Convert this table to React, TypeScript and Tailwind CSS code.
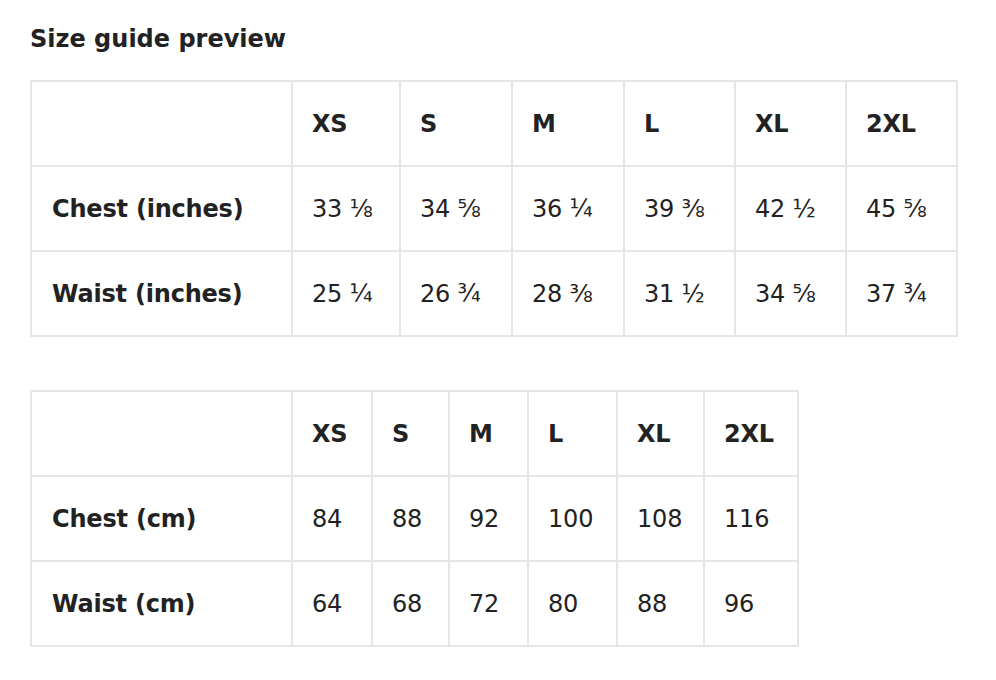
import React from 'react'

const sizes = ['XS', 'S', 'M', 'L', 'XL', '2XL']

const inchRows = [
  { label: 'Chest (inches)', values: ['33 ⅛', '34 ⅝', '36 ¼', '39 ⅜', '42 ½', '45 ⅝'] },
  { label: 'Waist (inches)', values: ['25 ¼', '26 ¾', '28 ⅜', '31 ½', '34 ⅝', '37 ¾'] },
]

const cmRows = [
  { label: 'Chest (cm)', values: ['84', '88', '92', '100', '108', '116'] },
  { label: 'Waist (cm)', values: ['64', '68', '72', '80', '88', '96'] },
]

// column widths read from the screenshot
const inchCols = [261, 108, 112, 112, 111, 111, 111]
const cmCols = [261, 80, 77, 79, 89, 87, 94]

function SizeTable({ rows, cols }: { rows: typeof inchRows; cols: number[] }) {
  const total = cols.reduce((a, b) => a + b, 0)
  return (
    <table className="table-fixed border-collapse" style={{ width: total }}>
      <colgroup>
        {cols.map((w, i) => (
          <col key={i} style={{ width: w }} />
        ))}
      </colgroup>
      <thead>
        <tr className="h-[85px]">
          <th className="border-2 border-[#e6e6e6]"></th>
          {sizes.map(s => (
            <th key={s} className="border-2 border-[#e6e6e6] pl-[19px] text-left font-bold">
              {s}
            </th>
          ))}
        </tr>
      </thead>
      <tbody>
        {rows.map(row => (
          <tr key={row.label} className="h-[85px]">
            <td className="border-2 border-[#e6e6e6] pl-[20px] font-bold">{row.label}</td>
            {row.values.map((v, i) => (
              <td key={i} className="border-2 border-[#e6e6e6] pl-[19px] whitespace-nowrap">
                {v}
              </td>
            ))}
          </tr>
        ))}
      </tbody>
    </table>
  )
}

export default function App() {
  return (
    <div className="min-h-screen bg-white px-[30px] pt-[21px] text-[#222] font-['DejaVu_Sans','Noto_Sans',sans-serif] text-[24px] tracking-[-0.2px]">
      <h2 className="text-[24px] font-bold leading-[36px] mb-[23px] tracking-[0px]">Size guide preview</h2>
      <div className="flex flex-col gap-[53px]">
        <SizeTable rows={inchRows} cols={inchCols} />
        <SizeTable rows={cmRows} cols={cmCols} />
      </div>
    </div>
  )
}
